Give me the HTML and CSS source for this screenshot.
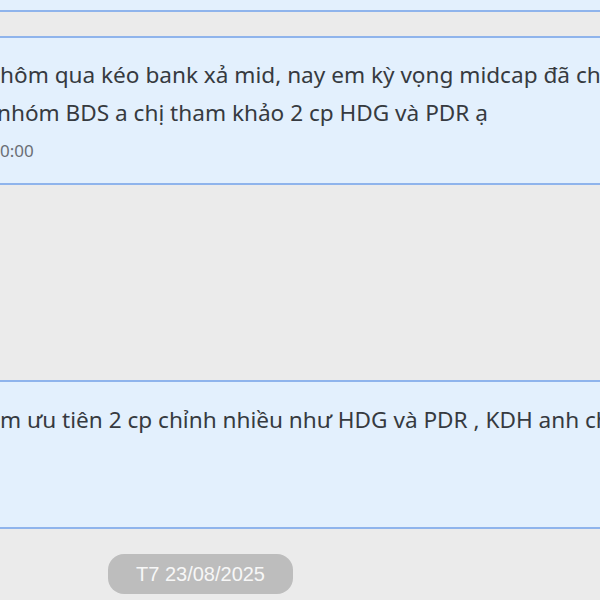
FILE: index.html
```html
<!DOCTYPE html>
<html lang="vi">

<head>
  <meta charset="UTF-8">
  <title>Tin nhắn</title>
  <link rel="stylesheet" href="styles.css">
</head>

<body>
  <div class="chat">
    <div class="msg msg-prev"></div>

    <div class="msg msg-first">
      <div class="line">hôm qua kéo bank xả mid, nay em kỳ vọng midcap đã chỉnh</div>
      <div class="line line-shift">nhóm BDS a chị tham khảo 2 cp HDG và PDR ạ</div>
      <div class="time">0:00</div>
    </div>

    <div class="msg msg-second">
      <div class="line">m ưu tiên 2 cp chỉnh nhiều như HDG và PDR , KDH anh chị</div>
    </div>

    <div class="day">
      <span class="day-pill">T7 23/08/2025</span>
    </div>
  </div>
</body>

</html>
```

FILE: styles.css
```css
body {
  margin: 0;
  background: #ebebeb;
  font-family: 'Noto Sans', sans-serif;
  color: #363a40;
  overflow: hidden;
}

.chat {
  display: flex;
  flex-direction: column;
  width: 600px;
  height: 600px;
  overflow: hidden;
}

.msg {
  background: #e3f0fd;
  border-top: 2px solid #8fb4ec;
  border-bottom: 2px solid #8fb4ec;
  overflow: hidden;
  white-space: nowrap;
}

.msg-prev {
  height: 10px;
  border-top: none;
}

.msg-first {
  margin-top: 24px;
  height: 149px;
  box-sizing: border-box;
  padding-top: 18px;
}

.msg-second {
  margin-top: 195px;
  height: 149px;
  box-sizing: border-box;
  padding-top: 19px;
}

.line {
  font-size: 22.6px;
  line-height: 38px;
}

.line-shift {
  margin-left: -3px;
}

.time {
  font-size: 17px;
  line-height: 24px;
  color: #6a6e75;
  margin-top: 7px;
}

.day {
  display: flex;
  padding-top: 25px;
  padding-left: 108px;
}

.day-pill {
  background: #bdbdbd;
  color: #f7f7f7;
  font-family: 'Liberation Sans', Arial, sans-serif;
  font-size: 20px;
  line-height: 40px;
  width: 185px;
  text-align: center;
  border-radius: 16px;
}
```
